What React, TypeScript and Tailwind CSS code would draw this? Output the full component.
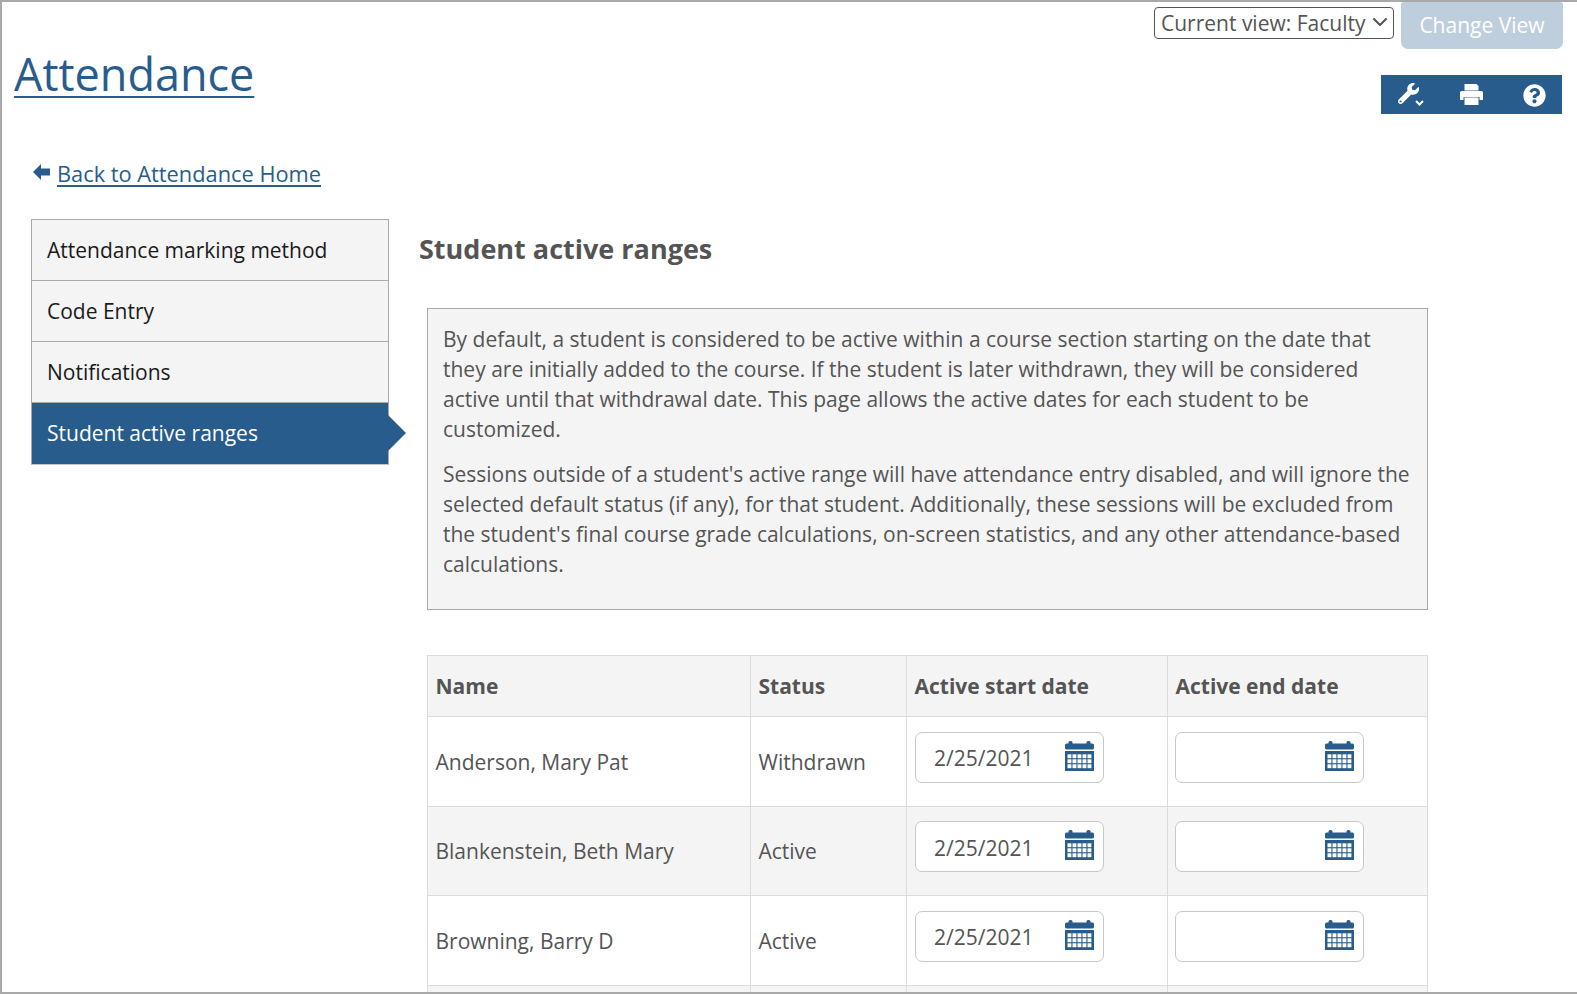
import React from "react";
import { FaQuestionCircle, FaWrench } from "react-icons/fa";
import { ChevronDown } from "lucide-react";

const navItems = ["Attendance marking method", "Code Entry", "Notifications", "Student active ranges"];

const students = [
  { name: "Anderson, Mary Pat", status: "Withdrawn", start: "2/25/2021" },
  { name: "Blankenstein, Beth Mary", status: "Active", start: "2/25/2021" },
  { name: "Browning, Barry D", status: "Active", start: "2/25/2021" },
];

function CalendarIcon() {
  const cells = [];
  for (let r = 0; r < 3; r++) {
    for (let c = 0; c < 5; c++) {
      cells.push(<rect key={`${r}-${c}`} x={2.5 + c * 5} y={13.3 + r * 5} width={3.9} height={3.9} fill="#fff" />);
    }
  }
  return (
    <svg width="29" height="30" viewBox="0 0 29 30" className="shrink-0">
      <rect x="0" y="2.5" width="29" height="6" rx="1.5" fill="#285c8d" />
      <rect x="3.5" y="0" width="4" height="5" rx="1.5" fill="#285c8d" />
      <rect x="21.5" y="0" width="4" height="5" rx="1.5" fill="#285c8d" />
      <rect x="0" y="10" width="29" height="20" fill="#285c8d" />
      {cells}
    </svg>
  );
}

function PrintIcon() {
  return (
    <svg width="23" height="21" viewBox="0 0 23 21" className="mr-[4px] shrink-0">
      <path d="M4.5 0h12l2 2v4.500h-14z" fill="#fff" />
      <path d="M1.500 7h20A1.500 1.500 0 0 1 23 8.500V16h-3.500v-3h-16v3H0V8.500A1.500 1.500 0 0 1 1.500 7z" fill="#fff" />
      <rect x="4.500" y="14" width="14" height="7" fill="#fff" />
      <rect x="4.500" y="13" width="14" height="1" fill="#9fb6cc" />
    </svg>
  );
}

function BackArrow() {
  return (
    <svg width="17" height="16" viewBox="0 0 17 16" className="-mt-[5px] shrink-0">
      <path d="M0 8L8 0v4.500h9v7H8V16z" fill="#285c8d" />
    </svg>
  );
}

function DateField({ value }: { value?: string }) {
  return (
    <div className="flex h-[51px] w-[189px] items-center justify-between rounded-[7px] border border-[#c8c8c8] bg-white pl-[18px] pr-[9px]">
      <input
        readOnly
        value={value ?? ""}
        className="mt-[4px] w-[110px] bg-transparent text-[21px] text-[#545454] outline-none"
      />
      <div className="-mt-[3px]">
        <CalendarIcon />
      </div>
    </div>
  );
}

export default function App() {
  return (
    <div className="h-[994px] w-[1577px] overflow-hidden border-t-2 border-b-2 border-l-2 border-[#a9a9a9] bg-white font-['Open_Sans',sans-serif] text-[#545454]">
      <div className="flex items-start justify-between pr-[14px]">
        <h1 className="ml-[12px] mt-[41px] text-[45px] leading-[62px] text-[#285c8d] underline decoration-2 underline-offset-[5px]">
          Attendance
        </h1>
        <div className="flex flex-col items-end">
          <div className="flex items-start gap-[7px]">
            <div className="relative mt-[5px]">
              <select className="h-[32px] w-[240px] appearance-none rounded-[4px] border border-[#545454] bg-white pl-[6px] text-[21px] leading-[28px] text-[#545454] outline-none">
                <option>Current view: Faculty</option>
              </select>
              <ChevronDown className="pointer-events-none absolute right-[2px] top-[3px] h-6 w-6 stroke-[2] text-[#545454]" />
            </div>
            <button className="h-[47px] w-[162px] rounded-b-[7px] rounded-t-[3px] bg-[#bfcedd] text-[21px] text-white">
              Change View
            </button>
          </div>
          <div className="mr-[1px] mt-[26px] flex h-[39px] w-[181px] items-center justify-between bg-[#285c8d] pl-[17px] pr-[16px] text-white">
            <span className="relative h-[24px] w-[26px]">
              <FaWrench className="h-[21px] w-[21px]" />
              <svg width="9" height="6" viewBox="0 0 9 6" className="absolute bottom-[1px] right-0">
                <path d="M1 1l3.500 3.500L8 1" fill="none" stroke="#fff" strokeWidth="2" />
              </svg>
            </span>
            <PrintIcon />
            <FaQuestionCircle className="mt-[1px] h-[23px] w-[23px]" />
          </div>
        </div>
      </div>

      <div className="ml-[31px] mt-[44px] flex items-center gap-[7px] text-[21.8px] text-[#285c8d]">
        <BackArrow />
        <a href="#" className="underline decoration-2 underline-offset-[3px]">Back to Attendance Home</a>
      </div>

      <div className="mt-[28px] flex">
        <nav className="ml-[29px] w-[358px] shrink-0 self-start border border-[#a9a9a9] border-b-[#c4c4c4]">
          {navItems.map((item, i) =>
            i === 3 ? (
              <div key={item} className="relative flex h-[61px] items-center bg-[#285c8d] pl-[15px] pt-[1px] text-[21px] text-white">
                {item}
                <span className="absolute left-full top-[12px] border-y-[18px] border-l-[18px] border-y-transparent border-l-[#285c8d]" />
              </div>
            ) : (
              <div key={item} className="flex h-[61px] items-center border-b border-[#a9a9a9] bg-[#f4f4f4] pl-[15px] pt-[2px] text-[21px] text-[#1a1a1a]">
                {item}
              </div>
            )
          )}
        </nav>

        <main className="ml-[30px] w-[1010px]">
          <h2 className="mt-[10px] text-[27px] font-bold leading-[40px]">Student active ranges</h2>
          <div className="ml-[8px] mt-[39px] h-[302px] w-[1001px] border border-[#a9a9a9] bg-[#f4f4f4] px-[15px] pt-[15px] text-[21px] leading-[30px]">
            <p>
              By default, a student is considered to be active within a course section starting on the date that they are initially added to the course. If the student is later withdrawn, they will be considered active until that withdrawal date. This page allows the active dates for each student to be customized.
            </p>
            <p className="mt-[15px]">
              Sessions outside of a student's active range will have attendance entry disabled, and will ignore the selected default status (if any), for that student. Additionally, these sessions will be excluded from the student's final course grade calculations, on-screen statistics, and any other attendance-based calculations.
            </p>
          </div>

          <table className="ml-[8px] mt-[45px] w-[1000px] table-fixed border-collapse text-[21px]">
            <colgroup>
              <col className="w-[323px]" />
              <col className="w-[156px]" />
              <col className="w-[261px]" />
              <col className="w-[260px]" />
            </colgroup>
            <thead>
              <tr className="h-[61px] bg-[#f4f4f4] text-left">
                {["Name", "Status", "Active start date", "Active end date"].map((h) => (
                  <th key={h} className="border border-[#dcdcdc] px-[7.5px] pt-[2px] font-bold">{h}</th>
                ))}
              </tr>
            </thead>
            <tbody>
              {students.map((s, i) => (
                <tr key={s.name} className={i % 2 === 1 ? "h-[89px] bg-[#f4f4f4]" : "h-[90px] bg-white"}>
                  <td className="border border-[#dcdcdc] px-[7.5px] pt-[3px]">{s.name}</td>
                  <td className="border border-[#dcdcdc] px-[7.5px] pt-[3px]">{s.status}</td>
                  <td className="border border-[#dcdcdc] px-[8px] pb-[8px]"><DateField value={s.start} /></td>
                  <td className="border border-[#dcdcdc] px-[7px] pb-[8px]"><DateField /></td>
                </tr>
              ))}
              <tr className="h-[90px] bg-[#f4f4f4]">
                <td className="border border-[#dcdcdc]" />
                <td className="border border-[#dcdcdc]" />
                <td className="border border-[#dcdcdc]" />
                <td className="border border-[#dcdcdc]" />
              </tr>
            </tbody>
          </table>
        </main>
      </div>
    </div>
  );
}
